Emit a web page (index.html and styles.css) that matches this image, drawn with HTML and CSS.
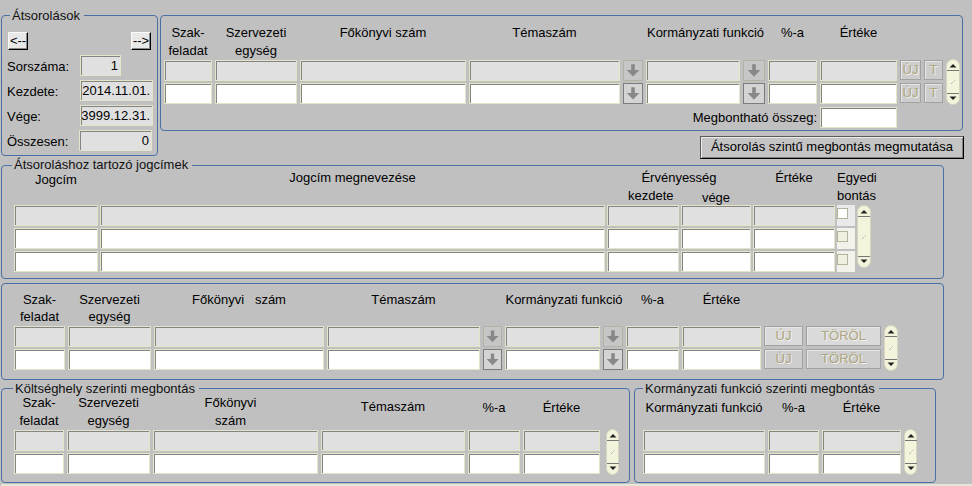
FILE: index.html
```html
<!DOCTYPE html>
<html lang="hu">
<head>
<meta charset="utf-8">
<title>Átsorolások</title>
<link rel="stylesheet" href="styles.css">
</head>
<body>
<div class="page">
  <div class="row-a">
    <div class="box fs1">
      <span class="legend lg1">Átsorolások</span>
      <div class="navs"><div class="nbtn">&lt;--</div><div class="nbtn">--&gt;</div></div>
      <div class="info">
        <span class="lbl">Sorszáma:</span><div class="f ro num w41">1</div>
        <span class="lbl">Kezdete:</span><div class="f ro num w73">2014.11.01.</div>
        <span class="lbl">Vége:</span><div class="f ro num w73">3999.12.31.</div>
        <span class="lbl">Összesen:</span><div class="f ro num w73 ml-1">0</div>
      </div>
    </div>
    <div class="col-a">
      <div class="box fs2">
        <div class="g2">
          <div class="h">Szak-<br>feladat</div>
          <div class="h">Szervezeti<br>egység</div>
          <div class="h">Főkönyvi szám</div>
          <div class="h">Témaszám</div>
          <div></div>
          <div class="h s2">Kormányzati funkció</div>
          <div class="h">%-a</div>
          <div class="h">Értéke</div>
          <div class="s3"></div>

          <div class="f ro"></div><div class="f ro"></div><div class="f ro"></div><div class="f ro"></div>
          <div class="dd"><svg viewBox="0 0 20 21"><path d="M8 3.5h4V10h5l-7 7.3L3 10h5z" fill="#888"/></svg></div>
          <div class="f ro"></div>
          <div class="dd"><svg viewBox="0 0 20 21"><path d="M8 3.5h4V10h5l-7 7.3L3 10h5z" fill="#888"/></svg></div>
          <div class="f ro"></div><div class="f ro"></div>
          <div class="xb">ÚJ</div><div class="xb">T</div>
          <div class="sb r2">
            <svg width="12" height="11" viewBox="0 0 12 11"><path d="M2.5 7.5h7L6 4z" fill="#222"/><path d="M0 10.5h12" stroke="#777"/></svg>
            <svg width="6" height="6" viewBox="0 0 6 6"><path d="M1 5L5 1" stroke="#999" stroke-dasharray="1 1"/></svg>
            <svg width="12" height="11" viewBox="0 0 12 11"><path d="M0 0.5h12" stroke="#777"/><path d="M2.5 3.5h7L6 7z" fill="#222"/></svg>
          </div>

          <div class="f"></div><div class="f"></div><div class="f"></div><div class="f"></div>
          <div class="dd act"><svg viewBox="0 0 20 21"><path d="M8 3.5h4V10h5l-7 7.3L3 10h5z" fill="#888"/></svg></div>
          <div class="f"></div>
          <div class="dd act"><svg viewBox="0 0 20 21"><path d="M8 3.5h4V10h5l-7 7.3L3 10h5z" fill="#888"/></svg></div>
          <div class="f"></div><div class="f"></div>
          <div class="xb">ÚJ</div><div class="xb">T</div>

          <div class="mlbl s8">Megbontható összeg:</div>
          <div class="f mt1"></div>
        </div>
      </div>
      <div class="bigbtn">Átsorolás szintű megbontás megmutatása</div>
    </div>
  </div>

  <div class="box fs3">
    <span class="legend lg3">Átsoroláshoz tartozó jogcímek</span>
    <div class="g3">
      <div class="h jc">Jogcím</div>
      <div class="h">Jogcím megnevezése</div>
      <div class="h s2 erv">
        <div>Érvényesség</div>
        <div class="erv2"><span class="kezd">kezdete</span><span class="vege">vége</span></div>
      </div>
      <div class="h">Értéke</div>
      <div class="h s2 left">Egyedi<br>bontás</div>

      <div class="f ro"></div><div class="f ro"></div><div class="f ro"></div><div class="f ro"></div><div class="f ro"></div>
      <div class="chk first"><div class="cb"></div></div>
      <div class="sb r3 tall">
        <svg width="12" height="11" viewBox="0 0 12 11"><path d="M2.5 7.5h7L6 4z" fill="#222"/><path d="M0 10.5h12" stroke="#777"/></svg>
        <svg width="6" height="6" viewBox="0 0 6 6"><path d="M1 5L5 1" stroke="#999" stroke-dasharray="1 1"/></svg>
        <svg width="12" height="11" viewBox="0 0 12 11"><path d="M0 0.5h12" stroke="#777"/><path d="M2.5 3.5h7L6 7z" fill="#222"/></svg>
      </div>

      <div class="f"></div><div class="f"></div><div class="f"></div><div class="f"></div><div class="f"></div>
      <div class="chk"><div class="cb"></div></div>

      <div class="f"></div><div class="f"></div><div class="f"></div><div class="f"></div><div class="f"></div>
      <div class="chk"><div class="cb"></div></div>
    </div>
  </div>

  <div class="box fs4">
    <div class="g4">
      <div class="h">Szak-<br>feladat</div>
      <div class="h">Szervezeti<br>egység</div>
      <div class="h">Főkönyvi&nbsp;&nbsp; szám</div>
      <div class="h">Témaszám</div>
      <div></div>
      <div class="h s2">Kormányzati funkció</div>
      <div class="h">%-a</div>
      <div class="h">Értéke</div>
      <div class="s3"></div>

      <div class="f ro"></div><div class="f ro"></div><div class="f ro"></div><div class="f ro"></div>
      <div class="dd"><svg viewBox="0 0 20 21"><path d="M8 3.5h4V10h5l-7 7.3L3 10h5z" fill="#888"/></svg></div>
      <div class="f ro"></div>
      <div class="dd"><svg viewBox="0 0 20 21"><path d="M8 3.5h4V10h5l-7 7.3L3 10h5z" fill="#888"/></svg></div>
      <div class="f ro"></div><div class="f ro"></div>
      <div class="xb lt">ÚJ</div><div class="xb lt">TÖRÖL</div>
      <div class="sb r2">
        <svg width="12" height="11" viewBox="0 0 12 11"><path d="M2.5 7.5h7L6 4z" fill="#222"/><path d="M0 10.5h12" stroke="#777"/></svg>
        <svg width="6" height="6" viewBox="0 0 6 6"><path d="M1 5L5 1" stroke="#999" stroke-dasharray="1 1"/></svg>
        <svg width="12" height="11" viewBox="0 0 12 11"><path d="M0 0.5h12" stroke="#777"/><path d="M2.5 3.5h7L6 7z" fill="#222"/></svg>
      </div>

      <div class="f"></div><div class="f"></div><div class="f"></div><div class="f"></div>
      <div class="dd act"><svg viewBox="0 0 20 21"><path d="M8 3.5h4V10h5l-7 7.3L3 10h5z" fill="#888"/></svg></div>
      <div class="f"></div>
      <div class="dd act"><svg viewBox="0 0 20 21"><path d="M8 3.5h4V10h5l-7 7.3L3 10h5z" fill="#888"/></svg></div>
      <div class="f"></div><div class="f"></div>
      <div class="xb">ÚJ</div><div class="xb">TÖRÖL</div>
    </div>
  </div>

  <div class="row-d">
    <div class="box fs5">
      <span class="legend lg5">Költséghely szerinti megbontás</span>
      <div class="g5">
        <div class="h">Szak-<br>feladat</div>
        <div class="h">Szervezeti<br>egység</div>
        <div class="h shl">Főkönyvi<br>szám</div>
        <div class="h pt4">Témaszám</div>
        <div class="h pt5">%-a</div>
        <div class="h pt5">Értéke</div>
        <div class="s2"></div>

        <div class="f ro"></div><div class="f ro"></div><div class="f ro"></div><div class="f ro"></div><div class="f ro"></div><div class="f ro"></div>
        <div></div>
        <div class="sb r2">
          <svg width="12" height="11" viewBox="0 0 12 11"><path d="M2.5 7.5h7L6 4z" fill="#222"/><path d="M0 10.5h12" stroke="#777"/></svg>
          <svg width="6" height="6" viewBox="0 0 6 6"><path d="M1 5L5 1" stroke="#999" stroke-dasharray="1 1"/></svg>
          <svg width="12" height="11" viewBox="0 0 12 11"><path d="M0 0.5h12" stroke="#777"/><path d="M2.5 3.5h7L6 7z" fill="#222"/></svg>
        </div>

        <div class="f"></div><div class="f"></div><div class="f"></div><div class="f"></div><div class="f"></div><div class="f"></div>
        <div></div>
      </div>
    </div>

    <div class="box fs6">
      <span class="legend lg6">Kormányzati funkció szerinti megbontás</span>
      <div class="g6">
        <div class="h pt5">Kormányzati funkció</div>
        <div class="h pt5">%-a</div>
        <div class="h pt5">Értéke</div>
        <div></div>

        <div class="f ro"></div><div class="f ro"></div><div class="f ro"></div>
        <div class="sb r2">
          <svg width="12" height="11" viewBox="0 0 12 11"><path d="M2.5 7.5h7L6 4z" fill="#222"/><path d="M0 10.5h12" stroke="#777"/></svg>
          <svg width="6" height="6" viewBox="0 0 6 6"><path d="M1 5L5 1" stroke="#999" stroke-dasharray="1 1"/></svg>
          <svg width="12" height="11" viewBox="0 0 12 11"><path d="M0 0.5h12" stroke="#777"/><path d="M2.5 3.5h7L6 7z" fill="#222"/></svg>
        </div>

        <div class="f"></div><div class="f"></div><div class="f"></div>
      </div>
    </div>
  </div>
  <div class="foot"></div>
</div>
</body>
</html>
```

FILE: styles.css
```css
* { box-sizing: border-box; }
html, body { margin: 0; padding: 0; }
body {
  width: 972px;
  height: 486px;
  overflow: hidden;
  background: #c0c0c0;
  font: 13px/15px "Liberation Sans", Arial, sans-serif;
  color: #000;
}
.page { padding: 15px 0 0 1px; }

.box {
  position: relative;
  border: 1px solid #4a70a3;
  border-radius: 4px;
}
.legend {
  position: absolute;
  top: -8px;
  padding: 0 4px 0 2px;
  background: #c0c0c0;
  line-height: 15px;
  white-space: nowrap;
  color: #111;
}
.lg1 { left: 8px; }
.lg3 { left: 10px; top: -9px; }
.lg5 { left: 11px; }
.lg6 { left: 8px; }

/* generic field */
.f {
  border: 1px solid #e4e4c8;
  box-shadow: inset 1px 1px 0 #848484;
  background: #fff;
  height: 21px;
}
.ro { background: #e0e0e0; }
.num { text-align: right; padding-right: 2px; line-height: 19px; white-space: nowrap; overflow: hidden; }
.w41 { width: 41px; }
.w73 { width: 73px; }
.ml-1 { margin-left: -1px; }
.mt1 { margin-top: 1px; }

.h { text-align: center; line-height: 18px; white-space: nowrap; }
.left { text-align: left; }
.jc { padding-top: 2px; }
.pt4 { padding-top: 4px; }
.pt5 { padding-top: 5px; }
.shl { padding-right: 10px; }
.s2 { grid-column: span 2; }
.s3 { grid-column: span 3; }
.s8 { grid-column: span 8; }
.r2 { grid-row: span 2; }
.r3 { grid-row: span 3; }

/* row A */
.row-a { display: flex; height: 150px; }
.fs1 { width: 157px; height: 141px; padding-top: 16px; }
.navs { display: flex; justify-content: space-between; padding: 0 6px; }
.nbtn {
  width: 20px;
  height: 18px;
  background: #e8e8e8;
  border: 1px solid;
  border-color: #fafafa #000 #000 #fafafa;
  box-shadow: inset -1px -1px 0 #8a8a8a;
  text-align: center;
  line-height: 15px;
  white-space: nowrap;
}
.info {
  display: grid;
  grid-template-columns: 73px auto;
  grid-auto-rows: 21px;
  row-gap: 4px;
  margin-top: 5px;
  padding-left: 5px;
  justify-items: start;
}
.lbl { line-height: 23px; }

.col-a { display: flex; flex-direction: column; margin-left: 2px; width: 803px; }
.fs2 { width: 803px; height: 116px; padding: 8px 0 0 3px; }
.g2 {
  display: grid;
  grid-template-columns: 48px 82px 166px 151px 20px 94px 22px 49px 77px 21px 19px 14px;
  grid-template-rows: 34px 21px 21px 21px;
  column-gap: 3px;
  row-gap: 2px;
}
.mlbl { text-align: right; line-height: 23px; white-space: nowrap; }

.bigbtn {
  align-self: flex-end;
  margin: 5px -1px 0 0;
  width: 264px;
  height: 23px;
  background: #c4c4c4;
  border: 1px solid #000;
  border-top-color: #5a5a5a;
  border-left-color: #5a5a5a;
  box-shadow: inset 1px 1px 0 #ececec, inset -1px -1px 0 #808080;
  text-align: center;
  line-height: 20px;
  white-space: nowrap;
}

/* dropdown arrow buttons */
.dd {
  height: 21px;
  border: 1px solid #b2b2a6;
  background: #c6c6c6;
}
.dd.act { border-color: #7c7c7c; background: #d4d4d4; }
.dd svg { display: block; width: 100%; height: 100%; }

/* small disabled buttons */
.xb {
  height: 20px;
  border: 1px solid #a2a2a2;
  background: #cdcdcd;
  box-shadow: inset 1px 1px 0 #e6e6e6;
  color: #aea67e;
  text-shadow: 1px 1px 0 #efefef;
  text-align: center;
  line-height: 18px;
  white-space: nowrap;
  overflow: hidden;
}
.xb.lt { background: #dadada; }

/* scroll widget */
.sb {
  display: flex;
  flex-direction: column;
  justify-content: space-between;
  align-items: center;
  margin: -1px 0;
  background: #f4f4dc;
  border: 1px solid #d6d6be;
  border-radius: 7px;
}
.sb svg { display: block; }
.sb.tall { margin: 0; height: 63px; align-self: start; }

/* fieldset 3 */
.fs3 { width: 943px; height: 114px; padding: 3px 0 0 12px; }
.g3 {
  display: grid;
  grid-template-columns: 84px 505px 72px 70px 82px 18px 14px;
  grid-template-rows: 34px 21px 21px 21px;
  column-gap: 2px;
  row-gap: 2px;
}
.erv2 { display: grid; grid-template-columns: 72px 70px; column-gap: 2px; }
.kezd { text-align: left; padding-left: 21px; }
.vege { text-align: center; padding-top: 2px; }
.chk { background: #f2f2ea; height: 21px; padding-top: 3px; }
.chk.first { background: #eaeaea; }
.cb { width: 11px; height: 11px; border: 1px solid #b4b49c; background: #f0f0e0; }
.chk.first .cb { background: #fff; }

/* fieldset 4 */
.fs4 { width: 943px; height: 97px; margin-top: 4px; padding: 7px 0 0 12px; }
.g4 {
  display: grid;
  grid-template-columns: 51px 83px 170px 153px 19px 95px 20px 53px 79px 39px 75px 14px;
  grid-template-rows: 33px 21px 21px;
  column-gap: 3px;
  row-gap: 2px;
}
.g4 .h { line-height: 17px; }

/* row D */
.row-d { display: flex; margin-top: 8px; }
.fs5 { width: 629px; height: 95px; padding: 5px 0 0 12px; }
.g5 {
  display: grid;
  grid-template-columns: 50px 83px 165px 144px 52px 77px 0 13px;
  grid-template-rows: 34px 21px 21px;
  column-gap: 3px;
  row-gap: 2px;
}
.fs6 { width: 302px; height: 95px; margin-left: 4px; padding: 5px 0 0 8px; }
.g6 {
  display: grid;
  grid-template-columns: 122px 51px 79px 13px;
  grid-template-rows: 34px 21px 21px;
  column-gap: 3px;
  row-gap: 2px;
}

.foot { margin-top: 1px; height: 2px; background: #e6e6d6; }
```
